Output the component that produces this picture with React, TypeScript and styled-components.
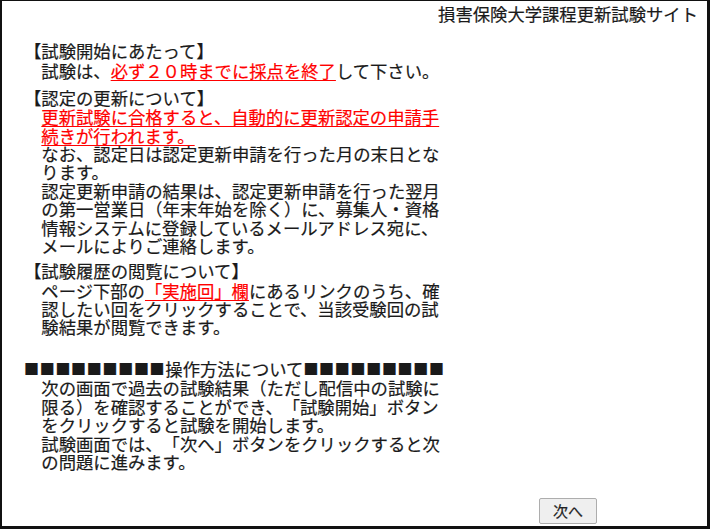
import styled, { createGlobalStyle } from 'styled-components';

const GlobalStyle = createGlobalStyle`
  html, body {
    margin: 0;
    padding: 0;
    background: #fff;
  }
  body {
    font-family: "Noto Sans CJK JP", "Noto Sans", sans-serif;
    color: #1a1a1a;
  }
`;

const Frame = styled.div`
  box-sizing: border-box;
  width: 710px;
  height: 529px;
  border-style: solid;
  border-color: #111;
  border-width: 1px 3px 3px 2px;
  display: flex;
  flex-direction: column;
  font-size: 17.33px;
  line-height: 18.4px;
  text-spacing-trim: space-all;
  -webkit-text-stroke: 0.2px currentColor;
`;

const SiteTitle = styled.div`
  text-align: right;
  padding: 4px 9px 0 0;
`;

const Content = styled.div`
  width: 430px;
  padding: 19px 0 0 22px;
`;

const Section = styled.section<{ gap: number }>`
  margin-top: ${({ gap }) => gap}px;
`;

const Heading = styled.div`
  margin-bottom: 1px;
  white-space: nowrap;
`;

const Squares = styled.span`
  font-size: 15px;
  letter-spacing: 0.7px;
  vertical-align: 1px;
`;

const Body = styled.div`
  padding-left: 1em;
  width: 410px;
`;

const Red = styled.span`
  color: #f00;
  text-decoration: underline;
  text-decoration-thickness: 1px;
  text-underline-offset: 2px;
`;

const Footer = styled.div`
  margin-top: auto;
  display: flex;
  justify-content: flex-end;
  padding: 0 110px 2.5px 0;
`;

const NextButton = styled.button`
  width: 58px;
  height: 26px;
  border: 1px solid #adadad;
  border-radius: 2px;
  background: #efefef;
  color: #222;
  font-family: "Noto Sans CJK JP", sans-serif;
  font-size: 15px;
  line-height: 1;
  padding: 0;
`;

const squares = '■■■■■■■■■';

export default function App() {
  return (
    <>
      <GlobalStyle />
      <Frame>
        <SiteTitle>損害保険大学課程更新試験サイト</SiteTitle>
        <Content>
          <Section gap={0}>
            <Heading>【試験開始にあたって】</Heading>
            <Body>
              試験は、<Red>必ず２０時までに採点を終了</Red>して下さい。
            </Body>
          </Section>
          <Section gap={8.6}>
            <Heading>【認定の更新について】</Heading>
            <Body>
              <Red>更新試験に合格すると、自動的に更新認定の申請手続きが行われます。</Red>
              <br />
              なお、認定日は認定更新申請を行った月の末日となります。
              <br />
              認定更新申請の結果は、認定更新申請を行った翌月の第一営業日（年末年始を除く）に、募集人・資格情報システムに登録しているメールアドレス宛に、メールによりご連絡します。
            </Body>
          </Section>
          <Section gap={6.8}>
            <Heading>【試験履歴の閲覧について】</Heading>
            <Body>
              ページ下部の<Red>「実施回」欄</Red>にあるリンクのうち、確認したい回をクリックすることで、当該受験回の試験結果が閲覧できます。
            </Body>
          </Section>
          <Section gap={23}>
            <Heading>
              <Squares>{squares}</Squares>操作方法について<Squares>{squares}</Squares>
            </Heading>
            <Body>
              次の画面で過去の試験結果（ただし配信中の試験に限る）を確認することができ、「試験開始」ボタンをクリックすると試験を開始します。
              <br />
              試験画面では、「次へ」ボタンをクリックすると次の問題に進みます。
            </Body>
          </Section>
        </Content>
        <Footer>
          <NextButton type="button">次へ</NextButton>
        </Footer>
      </Frame>
    </>
  );
}
